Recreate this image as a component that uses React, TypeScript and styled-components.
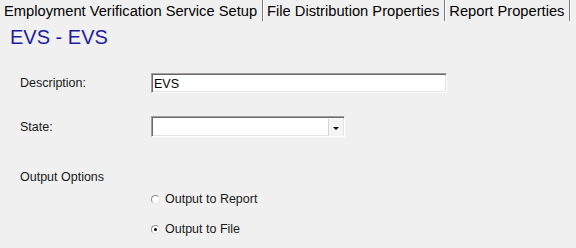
import React from "react";
import styled, { createGlobalStyle } from "styled-components";

const Global = createGlobalStyle`
  html, body { margin: 0; padding: 0; background: #f0f0f0; }
  body { font-family: "Liberation Sans", Arial, sans-serif; width: 576px; height: 248px; overflow: hidden; }
`;

const Page = styled.div`
  width: 576px;
  height: 248px;
  background: #f0f0f0;
  display: flex;
  flex-direction: column;
`;

const TabBar = styled.div`
  display: flex;
  height: 22px;
  padding-left: 3px;
`;

const Tab = styled.div`
  font-size: 14.7px;
  line-height: 22px;
  color: #000;
  padding: 0 5px 0 1px;
  margin-right: 3px;
  border-right: 1px solid #7a7a7a;
  box-shadow: 1px 0 0 #ffffff;
  height: 21px;
  white-space: nowrap;
`;

const Title = styled.div`
  margin: 3px 0 0 10px;
  font-size: 20px;
  line-height: 24px;
  color: #1e1e9c;
`;

const Form = styled.div`
  display: flex;
  flex-direction: column;
  padding: 24px 0 0 20px;
`;

const Row = styled.div<{ $top: number; $h?: number }>`
  display: flex;
  align-items: center;
  margin-top: ${(p) => p.$top}px;
  height: ${(p) => p.$h ?? 20}px;
`;

const Label = styled.div`
  width: 131px;
  font-size: 12.5px;
  color: #1a1a1a;
`;

const Indent = styled.div`
  width: 131px;
`;

const TextBox = styled.div<{ $w: number; $h: number }>`
  box-sizing: border-box;
  width: ${(p) => p.$w}px;
  height: ${(p) => p.$h}px;
  background: #fff;
  border-style: solid;
  border-width: 1px;
  border-color: #a0a0a0 #ffffff #ffffff #a0a0a0;
  box-shadow: inset 1px 1px 0 #696969, inset -1px -1px 0 #e3e3e3;
  font-size: 12.5px;
  line-height: 16px;
  padding: 1px 2px 0;
  display: flex;
  align-items: center;
  justify-content: space-between;
  color: #000;
`;

const DropButton = styled.div`
  box-sizing: border-box;
  width: 15px;
  height: 17px;
  margin-right: -1px;
  background: #f4f4f4;
  border-left: 1px solid #d6d6d6;
  display: flex;
  align-items: center;
  justify-content: center;
`;

const Arrow = styled.div`
  width: 0;
  height: 0;
  border-left: 3px solid transparent;
  border-right: 3px solid transparent;
  border-top: 3px solid #000;
  margin-top: 2px;
`;

const RadioCircle = styled.span<{ $checked?: boolean }>`
  box-sizing: border-box;
  width: 9px;
  height: 9px;
  border-radius: 50%;
  background: #fff;
  border: 1px solid;
  border-color: #8c8c8c #e4e4e4 #e4e4e4 #8c8c8c;
  display: inline-flex;
  align-items: center;
  justify-content: center;
  margin-right: 5px;
  &::after {
    content: "";
    display: ${(p) => (p.$checked ? "block" : "none")};
    width: 3px;
    height: 3px;
    border-radius: 50%;
    background: #000;
  }
`;

const RadioLabel = styled.span`
  font-size: 12.5px;
  color: #1a1a1a;
`;

const Radio = ({ label, checked }: { label: string; checked?: boolean }) => (
  <>
    <RadioCircle $checked={checked} />
    <RadioLabel>{label}</RadioLabel>
  </>
);

export default function App() {
  return (
    <Page>
      <Global />
      <TabBar>
        <Tab>Employment Verification Service Setup</Tab>
        <Tab>File Distribution Properties</Tab>
        <Tab>Report Properties</Tab>
      </TabBar>
      <Title>EVS - EVS</Title>
      <Form>
        <Row $top={0}>
          <Label>Description:</Label>
          <TextBox $w={296} $h={20}>EVS</TextBox>
        </Row>
        <Row $top={23} $h={21}>
          <Label>State:</Label>
          <TextBox $w={194} $h={21}>
            <span />
            <DropButton>
              <Arrow />
            </DropButton>
          </TextBox>
        </Row>
        <Row $top={30}>
          <Label>Output Options</Label>
        </Row>
        <Row $top={2}>
          <Indent />
          <Radio label="Output to Report" />
        </Row>
        <Row $top={10}>
          <Indent />
          <Radio label="Output to File" checked />
        </Row>
      </Form>
    </Page>
  );
}
